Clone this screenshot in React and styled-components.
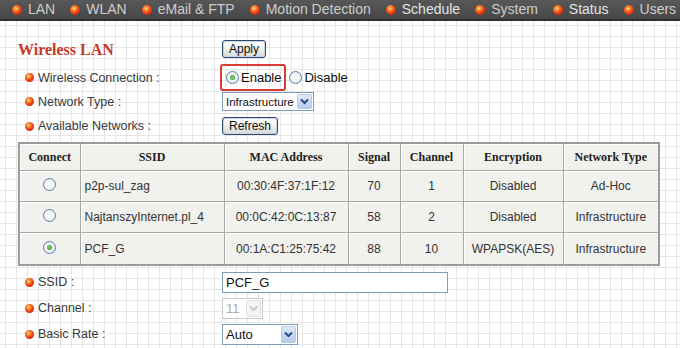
import React from "react";
import styled, { createGlobalStyle } from "styled-components";

const Global = createGlobalStyle`
  html, body { margin: 0; padding: 0; }
  body {
    width: 680px; height: 348px; overflow: hidden;
    font-family: Arial, "Liberation Sans", sans-serif;
    background-color: #fff;
    background-image:
      linear-gradient(to right, #e6e6e6 1px, transparent 1px),
      linear-gradient(to bottom, #e6e6e6 1px, transparent 1px);
    background-size: 11px 11px;
    background-position: 5px 3px;
  }
`;

const NavBar = styled.div`
  height: 19px;
  background: linear-gradient(#585858, #474747);
  border-bottom: 2px solid #2f2f2f;
  display: flex;
  align-items: center;
  padding-left: 12px;
  gap: 15px;
  white-space: nowrap;
  overflow: hidden;
`;

const NavItem = styled.div`
  display: flex;
  align-items: center;
  gap: 6px;
  font-family: "Liberation Sans", Arial, sans-serif;
  font-size: 14px;
  color: ${(p) => (p.$bright ? "#e4e4e4" : "#cdcdcd")};
  line-height: 19px;
`;

const Ball = styled.span`
  display: inline-block;
  width: ${(p) => p.$size}px;
  height: ${(p) => p.$size}px;
  border-radius: 50%;
  flex: none;
  background: radial-gradient(circle at 40% 35%, #ffe0a0 0%, #ff9a3a 18%, #ee4416 50%, #c41e0a 85%, #9a1506 100%);
`;

const Page = styled.div`
  padding: 17px 0 0 18px;
`;

const FormGrid = styled.div`
  display: grid;
  grid-template-columns: 204px 1fr;
  margin-top: ${(p) => p.$mt || 0}px;
`;

const Title = styled.div`
  font-family: "Liberation Serif", "Times New Roman", serif;
  font-weight: bold;
  font-size: 16px;
  color: #c4392b;
  height: 22px;
  display: flex;
  align-items: center;
  padding-top: 2px;
  box-sizing: border-box;
`;

const Cell = styled.div`
  height: ${(p) => p.$h}px;
  margin-top: ${(p) => p.$mt || 0}px;
  display: flex;
  align-items: center;
`;

const Label = styled(Cell)`
  padding-left: 7px;
  gap: 4px;
  font-size: 12.5px;
  color: #3a3a3a;
  font-family: "Liberation Sans", Arial, sans-serif;
`;

const Button = styled.button`
  height: 18px;
  padding: 0 6px;
  font-family: "Liberation Sans", Arial, sans-serif;
  font-size: 12px;
  color: #111;
  border: 1px solid #2b4a6e;
  border-radius: 3px;
  background: linear-gradient(#ffffff, #ecebe6 60%, #d9d8d2);
  box-shadow: inset 0 0 0 1px #c8d6e8;
  line-height: 16px;
`;

const RedBox = styled.div`
  height: 27px;
  box-sizing: border-box;
  border: 2px solid #d83a34;
  border-radius: 3px;
  display: flex;
  align-items: center;
  padding: 0 3px 0 4px;
  margin-left: -2px;
`;

const RadioGroup = styled.div`
  display: flex;
  align-items: center;
  gap: 2px;
  margin-left: ${(p) => p.$ml || 0}px;
  font-size: 13px;
  color: #111;
  font-family: "Liberation Sans", Arial, sans-serif;
`;

const Radio = styled.span`
  display: inline-block;
  width: 13px;
  height: 13px;
  box-sizing: border-box;
  border-radius: 50%;
  border: 1px solid #5b7fa6;
  background: radial-gradient(circle at 50% 50%, #ffffff 0%, #eef1f4 60%, #d5dbe2 100%);
  position: relative;
  flex: none;
  &::after {
    content: "";
    display: ${(p) => (p.$on ? "block" : "none")};
    position: absolute;
    left: 3px; top: 3px;
    width: 5px; height: 5px;
    border-radius: 50%;
    background: radial-gradient(circle, #7fd16e 0%, #2f9a2a 100%);
  }
`;

const Select = styled.div`
  width: ${(p) => p.$w}px;
  height: ${(p) => p.$h || 19}px;
  box-sizing: border-box;
  border: 1px solid ${(p) => (p.$disabled ? "#c9c9c4" : "#7f9db9")};
  background: #fff;
  display: flex;
  align-items: center;
  justify-content: space-between;
  padding: 1px 1px 1px 3px;
  font-family: "Liberation Sans", Arial, sans-serif;
  font-size: ${(p) => p.$fs || 12}px;
  color: ${(p) => (p.$disabled ? "#acacac" : "#111")};
`;

const Arrow = styled.span`
  width: 15px;
  height: 100%;
  box-sizing: border-box;
  border: 1px solid ${(p) => (p.$disabled ? "#e0e0dc" : "#b8cbe6")};
  border-radius: 2px;
  background: ${(p) =>
    p.$disabled ? "#f4f4f0" : "linear-gradient(#dfe9f8, #b5cbef)"};
  display: flex;
  align-items: center;
  justify-content: center;
`;

const TextInput = styled.div`
  width: 226px;
  height: 21px;
  box-sizing: border-box;
  border: 1px solid #7f9db9;
  background: #fff;
  padding-left: 3px;
  display: flex;
  align-items: center;
  font-size: 13px;
  color: #111;
  font-family: "Liberation Sans", Arial, sans-serif;
`;

const Table = styled.table`
  margin-top: 6px;
  width: 640px;
  border-collapse: collapse;
  border: 2px solid #9a9a9a;
  table-layout: fixed;
  background: #f1f1ed;
`;

const Th = styled.th`
  height: 26px;
  border: 1px solid #a8a8a4;
  box-shadow: inset 1px 1px 0 #fff;
  font-family: "Liberation Serif", "Times New Roman", serif;
  font-weight: bold;
  font-size: 12px;
  color: #222;
  padding: 0;
`;

const Td = styled.td`
  height: ${(p) => p.$h || 30}px;
  border: 1px solid #a8a8a4;
  box-shadow: inset 1px 1px 0 #fff;
  font-family: "Liberation Sans", Arial, sans-serif;
  font-size: 12px;
  color: #333;
  text-align: ${(p) => (p.$left ? "left" : "center")};
  padding: ${(p) => (p.$left ? "0 0 0 4px" : "0")};
`;

const Chevron = ({ color }) => (
  <svg width="9" height="7" viewBox="0 0 9 7">
    <path d="M1 1.5 L4.5 5 L8 1.5" fill="none" stroke={color} strokeWidth="2" />
  </svg>
);

const nav = [
  ["LAN"], ["WLAN"], ["eMail & FTP"], ["Motion Detection"],
  ["Schedule", true], ["System"], ["Status", true], ["Users"],
];

const cols = [61, 144, 124, 52, 63, 100, 96];
const heads = ["Connect", "SSID", "MAC Address", "Signal", "Channel", "Encryption", "Network Type"];
const rows = [
  [false, "p2p-sul_zag", "00:30:4F:37:1F:12", "70", "1", "Disabled", "Ad-Hoc"],
  [false, "NajtanszyInternet.pl_4", "00:0C:42:0C:13:87", "58", "2", "Disabled", "Infrastructure"],
  [true, "PCF_G", "00:1A:C1:25:75:42", "88", "10", "WPAPSK(AES)", "Infrastructure"],
];

export default function App() {
  return (
    <>
      <Global />
      <NavBar>
        {nav.map(([t, b]) => (
          <NavItem key={t} $bright={b}>
            <Ball $size={10} />
            {t}
          </NavItem>
        ))}
      </NavBar>
      <Page>
        <FormGrid>
          <Title>Wireless LAN</Title>
          <Cell $h={22}>
            <Button>Apply</Button>
          </Cell>

          <Label $h={29} $mt={3}><Ball $size={9} />Wireless Connection :</Label>
          <Cell $h={29} $mt={3}>
            <RedBox>
              <RadioGroup><Radio $on />Enable</RadioGroup>
            </RedBox>
            <RadioGroup $ml={3}><Radio />Disable</RadioGroup>
          </Cell>

          <Label $h={19}><Ball $size={9} />Network Type :</Label>
          <Cell $h={19}>
            <Select $w={92} $fs={11.5}>
              Infrastructure
              <Arrow><Chevron color="#2a4c8c" /></Arrow>
            </Select>
          </Cell>

          <Label $h={20} $mt={5}><Ball $size={9} />Available Networks :</Label>
          <Cell $h={20} $mt={5}>
            <Button>Refresh</Button>
          </Cell>
        </FormGrid>

        <Table>
          <colgroup>
            {cols.map((w, i) => <col key={i} style={{ width: w }} />)}
          </colgroup>
          <thead>
            <tr>{heads.map((h) => <Th key={h}>{h}</Th>)}</tr>
          </thead>
          <tbody>
            {rows.map((r, i) => (
              <tr key={r[1]}>
                <Td $h={i === 2 ? 31 : 30}><Radio $on={r[0]} /></Td>
                <Td $left>{r[1]}</Td>
                {r.slice(2).map((c, j) => <Td key={j}>{c}</Td>)}
              </tr>
            ))}
          </tbody>
        </Table>

        <FormGrid $mt={3}>
          <Label $h={26}><Ball $size={9} />SSID :</Label>
          <Cell $h={26}><TextInput>PCF_G</TextInput></Cell>

          <Label $h={26}><Ball $size={9} />Channel :</Label>
          <Cell $h={26}>
            <Select $w={41} $h={21} $fs={13} $disabled>
              11
              <Arrow $disabled><Chevron color="#c8c8c4" /></Arrow>
            </Select>
          </Cell>

          <Label $h={26}><Ball $size={9} />Basic Rate :</Label>
          <Cell $h={26}>
            <Select $w={76} $h={21} $fs={13}>
              Auto
              <Arrow><Chevron color="#2a4c8c" /></Arrow>
            </Select>
          </Cell>
        </FormGrid>
      </Page>
    </>
  );
}
